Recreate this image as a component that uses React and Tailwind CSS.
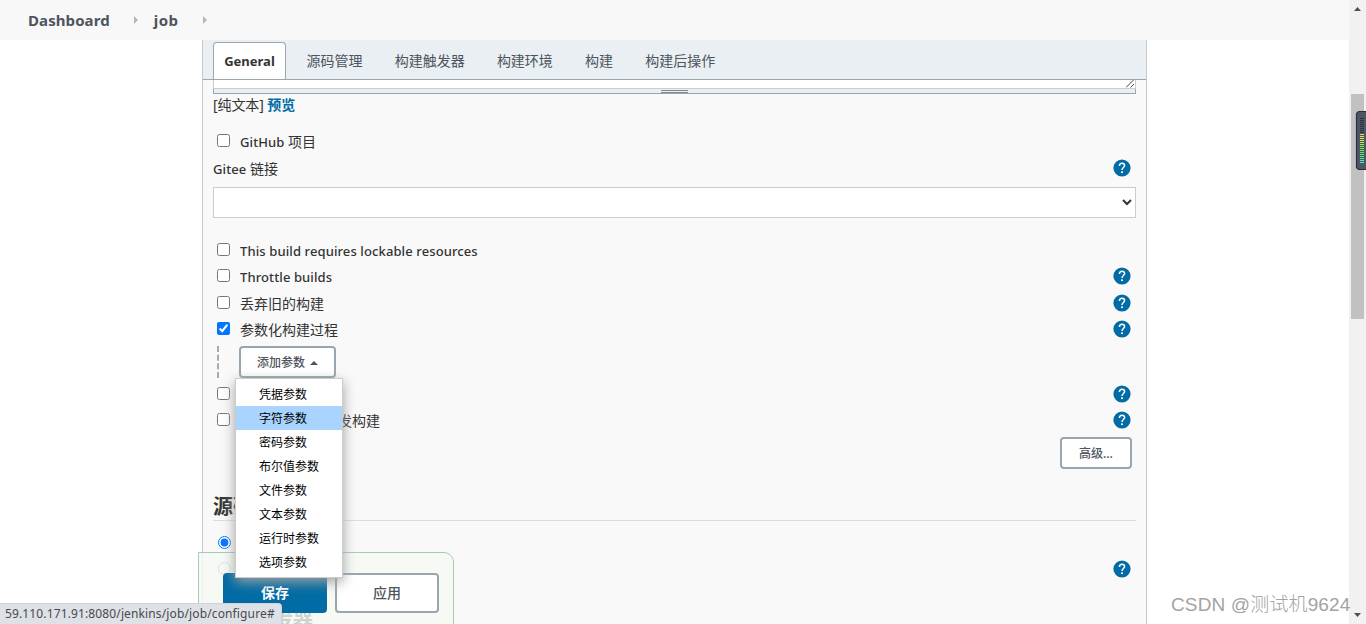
import clsx from 'clsx';

const TABS = ['源码管理', '构建触发器', '构建环境', '构建', '构建后操作'];

const PARAMS = [
  '凭据参数',
  '字符参数',
  '密码参数',
  '布尔值参数',
  '文件参数',
  '文本参数',
  '运行时参数',
  '选项参数',
];

function Help({ className }) {
  return (
    <svg
      className={clsx('ml-auto mr-[5px] block h-[18px] w-[18px] shrink-0', className)}
      viewBox="0 0 18 18"
    >
      <circle cx="9" cy="9" r="8.6" fill="#006ba4" />
      <path
        d="M6.4 7C6.4 5.1 7.5 4.2 9 4.2s2.6 1 2.6 2.4c0 1.9-2.6 2-2.6 4.3"
        fill="none"
        stroke="#fff"
        strokeWidth="1.5"
      />
      <rect x="8.1" y="12.3" width="1.8" height="1.8" fill="#fff" />
    </svg>
  );
}

// latin part of a label, set a little smaller than the chinese text
function En({ children }) {
  return <span className="text-[13px] font-medium tracking-[0.11px]">{children}</span>;
}

function Row({ label, help, className, inputClass, type = 'checkbox', checked = false }) {
  return (
    <div className={clsx('flex items-center', className || 'h-[26px]')}>
      <label className="flex items-center">
        <input
          type={type}
          defaultChecked={checked}
          className={clsx('relative ml-1 h-[13px] w-[13px] shrink-0', inputClass || '-top-px')}
        />
        <span className="relative top-px ml-[10px] whitespace-nowrap leading-5">{label}</span>
      </label>
      {help && <Help />}
    </div>
  );
}

function Crumb({ children, className }) {
  return (
    <div className={clsx('flex items-center', className)}>
      <span className="text-[15px] font-bold leading-5 tracking-[0.08px] text-[#4d545d]">
        {children}
      </span>
      <svg className="ml-6 h-[8px] w-[4px]" viewBox="0 0 4 8">
        <path d="M0 0L4 4L0 8Z" fill="#b5b5b5" />
      </svg>
    </div>
  );
}

function Scrollbar() {
  return (
    <div className="flex h-full w-[17px] shrink-0 flex-col items-center bg-[#f1f1f1]">
      <svg className="mt-[7px] h-[4px] w-[7px]" viewBox="0 0 7 4">
        <path d="M0 4L3.5 0L7 4Z" fill="#505050" />
      </svg>
      <div className="mt-[83px] h-[225px] w-[13px] bg-[#c1c1c1]" />
      <svg className="mb-[7px] mt-auto h-[4px] w-[7px]" viewBox="0 0 7 4">
        <path d="M0 0L3.5 4L7 0Z" fill="#505050" />
      </svg>
    </div>
  );
}

// small level meter docked to the right edge of the desktop
function Meter() {
  return (
    <svg className="absolute left-[1355px] top-[110px] h-[61px] w-[11px]" viewBox="0 0 11 61">
      <rect x="1.5" y="1.5" width="16" height="58" rx="3" fill="#4e5565" stroke="#2b2d3a" strokeWidth="1.2" />
      {Array.from({ length: 23 }, (_, i) => (
        <rect
          key={i}
          x="5"
          y={8 + i * 2}
          width="4"
          height="1"
          fill={i < 8 ? '#2f3140' : `hsl(${50 + (i - 8) * 8.2} 78% 62%)`}
        />
      ))}
    </svg>
  );
}

export default function App() {
  return (
    <div className="relative flex h-[624px] w-[1366px] overflow-hidden bg-white font-['Noto_Sans','Noto_Sans_CJK_SC',sans-serif] text-[14px] text-[#333]">
      <div className="flex min-w-0 flex-1 flex-col">
        <header className="flex h-10 shrink-0 items-center bg-[#f8f8f8] pl-7">
          <Crumb>Dashboard</Crumb>
          <Crumb className="ml-4">
            <span className="tracking-[0.5px]">job</span>
          </Crumb>
        </header>

        <main className="ml-[202px] flex h-[584px] w-[945px] flex-col border-x border-[#c6c9cc] bg-[#f9f9f9]">
          <nav className="flex h-10 shrink-0 items-end border-b border-[#98a6af] bg-[#e9eff3] pl-[10px]">
            <div className="flex h-[37px] w-[73px] items-center justify-center rounded-t-[4px] border border-b-0 border-[#98a6af] bg-white pt-0.5 text-[13px] font-bold">
              General
            </div>
            <div className="ml-[20.5px] flex h-[37px] items-center gap-[32.2px] text-[#4d545d]">
              {TABS.map((tab) => (
                <span key={tab}>{tab}</span>
              ))}
            </div>
          </nav>

          <div className="flex flex-col px-[10px]">
            <div className="flex h-[9px] items-start justify-end border border-t-0 border-[#ccc] bg-white">
              <svg className="h-[8px] w-[9px]" viewBox="0 0 9 8">
                <path d="M0 7.5L7.5 0M4.5 7.5L8 4" stroke="#444" fill="none" />
              </svg>
            </div>
            <div className="flex h-[5px] flex-col items-center border border-t-0 border-[#98a6af] bg-[#e9eff3] pt-px">
              <div className="h-[3px] w-[27px] border-y border-[#888]" />
            </div>

            <div className="h-[22px] leading-[22px] tracking-[-0.1px]">
              [纯文本] <a className="font-bold text-[#006ba4]">预览</a>
            </div>

            <Row className="mt-3 h-[26px]" label={<><En>GitHub </En>项目</>} />
            <div className="mt-px flex h-[27px] items-center">
              <span className="leading-5">
                <En>Gitee </En>链接
              </span>
              <Help className="relative -top-px" />
            </div>
            <select className="mt-[5px] h-[31px] w-full border border-[#ccc] bg-white" />

            <Row
              className="mt-[19px] h-[26px]"
              label={<En>This build requires lockable resources</En>}
            />
            <Row label={<En>Throttle builds</En>} help />
            <Row className="h-[27px]" inputClass="top-0" label="丢弃旧的构建" help />
            <Row label="参数化构建过程" checked help />

            <div className="mt-1 flex h-8">
              <div className="ml-1 w-[22px] border-l-2 border-dashed border-[#aaa]" />
              <button className="flex h-8 w-[97px] items-center justify-center rounded-[4px] border-2 border-[#98a6af] bg-white pt-0.5 text-[12px] font-medium text-[#4d545d]">
                添加参数
                <svg className="-mt-px ml-[5px] h-[4px] w-[8px]" viewBox="0 0 8 4">
                  <path d="M0 4L4 0L8 4Z" fill="#4d545d" />
                </svg>
              </button>
            </div>

            <Row className="mt-[3px] h-[26px]" label="关闭构建" help />
            <Row label="在必要的时候并发构建" help />

            <button className="ml-auto mr-1 mt-1 h-8 w-[72px] rounded-[4px] border-2 border-[#98a6af] bg-white pt-0.5 text-[12px] font-medium text-[#4d545d]">
              高级...
            </button>

            <h2 className="mt-[23px] h-[29px] border-b border-[#ddd] pt-px text-[20px] font-bold leading-[28px]">
              源码管理
            </h2>
            <Row type="radio" className="mt-[9px] h-[26px]" inputClass="-top-px left-px" label="无" checked />
            <Row type="radio" className="h-[26px]" inputClass="-top-px left-px" label="Git" help />
            <h2 className="mt-[25px] h-[29px] text-[20px] font-bold leading-[28px]">构建触发器</h2>
          </div>
        </main>
      </div>

      <Scrollbar />

      <div className="absolute left-[198px] top-[552px] flex h-[80px] w-[256px] gap-2 rounded-tr-[10px] border border-[#a0cdb8] bg-[#f6faf2]/80 pl-6 pt-5 text-[14px] font-bold">
        <button className="h-10 w-[104px] rounded-[4px] bg-[#006ba4] pb-0.5 text-white">保存</button>
        <button className="h-10 w-[104px] rounded-[4px] border-2 border-[#98a6af] bg-white pb-0.5 font-medium text-[#4d545d]">
          应用
        </button>
      </div>

      <ul className="absolute left-[235px] top-[378px] h-[200px] w-[108px] border border-[#ccc] bg-white py-[3px] text-[12px] text-black shadow-[0_4px_12px_#a0a0a0]">
        {PARAMS.map((name, i) => (
          <li key={name} className={clsx('h-6 pl-[23px] pt-px leading-6', i === 1 && 'bg-[#a8d4ff]')}>
            {name}
          </li>
        ))}
      </ul>

      <div className="absolute bottom-0 left-0 h-[21px] w-[282px] rounded-tr-[4px] border-r border-t border-[#cfd2d7] bg-[#dee1e6] pl-[5px] text-[12px] leading-[20px] tracking-[0.13px] text-[#474a4e]">
        59.110.171.91:8080/jenkins/job/job/configure#
      </div>

      <Meter />

      <div className="absolute left-[1171px] top-[591px] whitespace-nowrap font-['Liberation_Sans','Noto_Sans_CJK_SC',sans-serif] text-[19px] font-light leading-7 tracking-[0.14px] text-[#a3a3a3] [text-shadow:-1px_-1px_0_#ffffffcc]">
        CSDN @测试机9624
      </div>
    </div>
  );
}
